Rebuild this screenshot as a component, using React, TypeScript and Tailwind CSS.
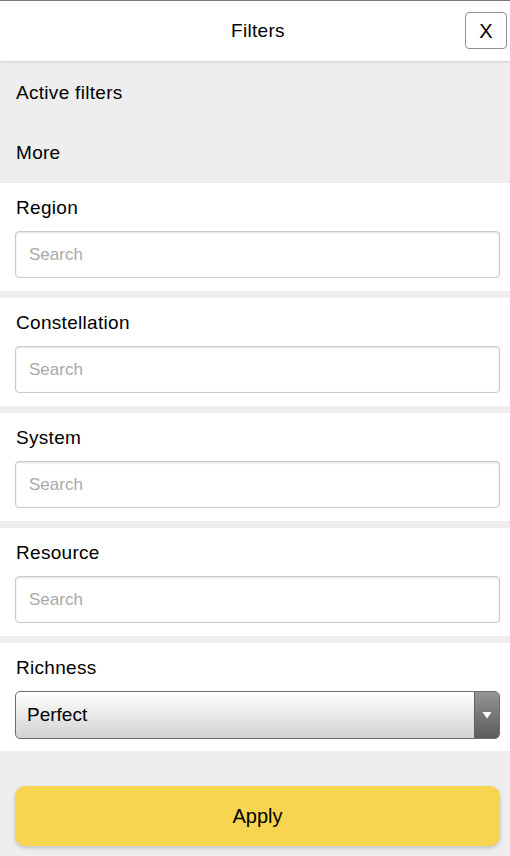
import React from "react";

const font = { fontFamily: '"Liberation Sans", Arial, sans-serif' };

function SearchSection({ label }: { label: string }) {
  return (
    <div className="bg-white pl-[15px] pr-[10px] pt-3 pb-[13px]">
      <div className="h-6 flex items-center text-[19px] tracking-[0.3px] text-black leading-none pl-px">{label}</div>
      <div className="mt-3 h-[47px] rounded-[4px] border border-[#c9c9c9] shadow-[inset_0_1px_2px_rgba(0,0,0,0.12)] flex items-center pl-[13px]">
        <span className="text-[17px] text-[#a9a9a9]">Search</span>
      </div>
    </div>
  );
}

export default function App() {
  return (
    <div style={font} className="w-[510px] h-[856px] bg-[#eeeeee] flex flex-col overflow-hidden border-t border-[#7a7a7a]">
      <div className="relative h-[60px] bg-white flex items-center justify-center pl-[6px] shadow-[0_1px_2px_rgba(0,0,0,0.15)] z-10">
        <span className="text-[19px] tracking-[0.3px] text-black">Filters</span>
        <button className="absolute right-[3px] top-[11px] w-[42px] h-[37px] rounded-[4px] border border-[#8f8f8f] bg-white flex items-center justify-center text-[20px] text-black">
          X
        </button>
      </div>
      <div className="flex flex-col">
        <div className="h-[61px] flex items-center pt-[3px] px-4 text-[19px] tracking-[0.3px] text-black">Active filters</div>
        <div className="h-[61px] flex items-center pt-[2px] px-4 text-[19px] tracking-[0.3px] text-black">More</div>
      </div>
      <div className="flex flex-col gap-[7px]">
        <SearchSection label="Region" />
        <SearchSection label="Constellation" />
        <SearchSection label="System" />
        <SearchSection label="Resource" />
        <div className="bg-white pl-[15px] pr-[10px] pt-3 pb-[12px]">
          <div className="h-6 flex items-center text-[19px] tracking-[0.3px] text-black leading-none pl-px">Richness</div>
          <div className="mt-3 h-[48px] rounded-[5px] border border-[#6e6e6e] flex overflow-hidden bg-gradient-to-b from-[#ffffff] to-[#d2d2d2]">
            <div className="flex-1 flex items-center pl-[11px] text-[19px] text-black">Perfect</div>
            <div className="w-[25px] border-l border-[#5f5f5f] bg-gradient-to-b from-[#959595] to-[#5b5b5b] flex items-center justify-center">
              <svg width="10" height="8" viewBox="0 0 10 8">
                <path d="M0.5 1 L9.5 1 L5 7.5 Z" fill="#ffffff" />
              </svg>
            </div>
          </div>
        </div>
      </div>
      <div className="pl-[15px] pr-[10px] pt-[35px]">
        <button className="w-full h-[60px] rounded-[10px] bg-[#f7d550] shadow-[0_2px_4px_rgba(0,0,0,0.18)] flex items-center justify-center text-[20px] text-black">
          Apply
        </button>
      </div>
    </div>
  );
}
